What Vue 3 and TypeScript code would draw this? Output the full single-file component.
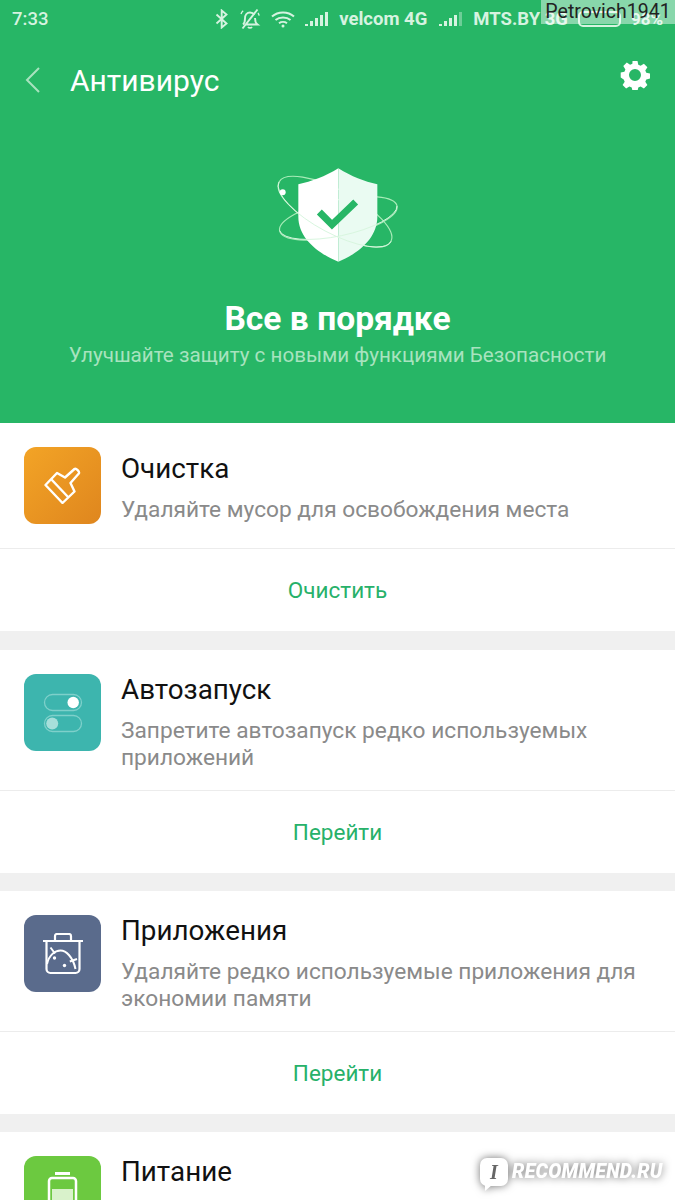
<script setup lang="ts">
interface Card { title: string; desc: string[]; action: string; icon: string }
const cards: Card[] = [
  { title: 'Очистка', desc: ['Удаляйте мусор для освобождения места'], action: 'Очистить', icon: 'brush' },
  { title: 'Автозапуск', desc: ['Запретите автозапуск редко используемых', 'приложений'], action: 'Перейти', icon: 'toggle' },
  { title: 'Приложения', desc: ['Удаляйте редко используемые приложения для', 'экономии памяти'], action: 'Перейти', icon: 'apps' },
]
</script>

<template>
  <div class="page">
    <header class="hero">
      <div class="status">
        <span class="time">7:33</span>
        <div class="status-right">
          <svg class="st-icon" width="14" height="20" viewBox="0 0 14 20" fill="none" stroke="#d6f3e0" stroke-width="1.900"><path d="M1.500 5.500l10 9-4.800 4V1.500l4.800 4-10 9"/></svg>
          <svg class="st-icon" width="22" height="22" viewBox="0 0 22 22" fill="none" stroke="#d6f3e0" stroke-width="1.900"><path d="M4 16.500c1.800-1.500 2-3.500 2-6C6 7 8 4.500 11 4.500c2 0 3.500 1 4.500 2.500M16 10c0 3 .5 5 2.500 6.500H7M9 19c1 1.200 3 1.200 4 0M3.500 20.500L18.500 1.500"/><path d="M2 6c.5-1.500 1.200-2.500 2.200-3.300M19 5c.6.800 1 1.700 1.200 2.700" stroke-width="1.300"/></svg>
          <svg class="st-icon" width="24" height="18" viewBox="0 0 24 18" fill="none" stroke="#d6f3e0" stroke-width="2"><path d="M1 6.500c6-5.500 16-5.500 22 0M4.500 10c4-3.500 11-3.500 15 0M8 13.200c2.200-1.600 5.800-1.600 8 0"/><circle cx="12" cy="16" r="1.500" fill="#d6f3e0" stroke="none"/></svg>
          <svg class="st-icon" width="24" height="16" viewBox="0 0 24 16" fill="#d6f3e0"><rect x="0" y="13" width="3" height="2"/><rect x="5" y="10" width="3" height="5"/><rect x="10" y="7" width="3" height="8"/><rect x="15" y="4" width="3" height="11"/><rect x="20" y="1" width="3" height="14"/></svg>
          <span class="carrier">velcom 4G</span>
          <svg class="st-icon" width="24" height="16" viewBox="0 0 24 16" fill="#d6f3e0"><rect x="0" y="13" width="3" height="2"/><rect x="5" y="10" width="3" height="5"/><rect x="10" y="7" width="3" height="8"/><rect x="15" y="4" width="3" height="11"/><rect x="20" y="1" width="3" height="14" opacity=".4"/></svg>
          <span class="carrier mts">MTS.BY 3G</span>
          <span class="battery"></span>
          <span class="carrier pct">98%</span>
        </div>
      </div>

      <div class="toolbar">
        <svg class="back" width="18" height="28" viewBox="0 0 18 28" fill="none" stroke="#a8e3bf" stroke-width="2"><path d="M15 2L3 14l12 12"/></svg>
        <span class="screen-title">Антивирус</span>
        <svg class="gear" width="30" height="30" viewBox="0 0 30 30">
          <path fill="#fff" fill-rule="evenodd" d="M12.500 1h5l.8 3.800 2.300 1 3.300-2.100 3.500 3.500-2.100 3.300 1 2.300 3.700.8v5l-3.700.8-1 2.300 2.100 3.300-3.500 3.500-3.300-2.100-2.300 1-.8 3.700h-5l-.8-3.700-2.300-1-3.300 2.100-3.500-3.500 2.100-3.300-1-2.300L.7 17.500v-5l3.700-.8 1-2.300-2.100-3.300 3.500-3.500 3.300 2.100 2.300-1zM15 9a6 6 0 1 0 0 12 6 6 0 0 0 0-12z"/>
        </svg>
      </div>

      <svg class="shield" width="160" height="125" viewBox="0 0 480 375" fill="none">
        <ellipse cx="225" cy="185" rx="190" ry="65" transform="rotate(28 225 185)" stroke="#a8ecb8" stroke-width="3.500"/>
        <ellipse cx="235" cy="205" rx="180" ry="55" transform="rotate(-12 235 205)" stroke="#a8ecb8" stroke-width="3.500"/>
        <path d="M235 55C195 80 155 94 115 103V200C115 265 175 310 235 335z" fill="#fff"/>
        <path d="M235 55C275 80 312 94 352 103V200C352 265 295 310 235 335z" fill="#eafbf2"/>
        <path d="M57 96A190 65 28 0 0 393 274" stroke="#d8f6df" stroke-width="3"/>
        <path d="M59 242A180 55 -12 0 0 411 168" stroke="#d8f6df" stroke-width="3"/>
        <circle cx="68" cy="127" r="9" fill="#fff"/>
        <path d="M178 186l38 38 71-68" stroke="#27b666" stroke-width="21"/>
      </svg>

      <h1 class="hero-title">Все в порядке</h1>
      <p class="hero-sub">Улучшайте защиту с новыми функциями Безопасности</p>
    </header>

    <section v-for="c in cards" :key="c.title" class="card">
      <div class="card-body">
        <div class="icon" :class="c.icon">
          <svg v-if="c.icon === 'brush'" width="37" height="37" viewBox="-.5 -.5 37 37" fill="none" stroke="#fff" stroke-width="2.400" stroke-linejoin="round">
            <path d="M1 17.500L12.500 5.500l8 4.500L30 1.500c1.500-1.200 5.500 2.800 4.300 4.500L26 15.500l4 8.500L18 35.500z"/>
            <path d="M6.500 11.500L24 30"/>
          </svg>
          <svg v-else-if="c.icon === 'toggle'" width="40" height="42" viewBox="0 0 40 42" fill="none">
            <rect x="1.500" y="2.500" width="37" height="16" rx="8" stroke="#7ed0ca" stroke-width="1.300"/>
            <circle cx="30.200" cy="10.500" r="5.700" fill="#fff"/>
            <rect x="1.500" y="23.500" width="37" height="16" rx="8" stroke="#7ed0ca" stroke-width="1.300"/>
            <circle cx="9.200" cy="31.500" r="6" fill="#a6dfda"/>
          </svg>
          <svg v-else width="42" height="42" viewBox="0 0 42 42" fill="none" stroke="#fff" stroke-width="2.200" stroke-linejoin="round">
            <path d="M1 8h40M13 8V3a2 2 0 0 1 2-2h12a2 2 0 0 1 2 2v5"/>
            <path d="M4.500 8v28a4 4 0 0 0 4 4h25a4 4 0 0 0 4-4V8"/>
            <path d="M5 31C7 22 13 17.500 18.500 17.500C24 17.500 31 24 33.500 36" stroke-width="2"/>
            <path d="M8.500 14.500l4.500 6M27.800 28.500l7.200-2.500" stroke-width="2"/>
            <circle cx="12.500" cy="25" r="1.700" fill="#fff" stroke="none"/>
            <circle cx="22.500" cy="32.500" r="1.700" fill="#fff" stroke="none"/>
          </svg>
        </div>
        <div class="text">
          <h2>{{ c.title }}</h2>
          <p v-for="l in c.desc" :key="l">{{ l }}</p>
        </div>
      </div>
      <div class="action">{{ c.action }}</div>
    </section>

    <section class="card last">
      <div class="card-body">
        <div class="icon power">
          <svg width="31" height="45" viewBox="0 0 31 45" fill="none" stroke="#fff" stroke-width="2.500">
            <path d="M8 1.500h15" stroke-width="3"/>
            <rect x="2" y="6" width="27" height="37" rx="3"/>
            <rect x="5" y="17" width="21" height="24" fill="#d9f2cb" stroke="none"/>
          </svg>
        </div>
        <div class="text"><h2>Питание</h2></div>
      </div>
    </section>

    <div class="wm">Petrovich1941</div>
    <div class="rec">
      <span class="rec-badge">I</span>
      <span class="rec-text">RECOMMEND.RU</span>
    </div>
  </div>
</template>

<style>
html, body { margin: 0; padding: 0; background: #f2f2f2; }
</style>

<style scoped>
.page {
  position: relative;
  width: 675px;
  height: 1200px;
  overflow: hidden;
  background: #f0f0f0;
  font-family: Roboto, "Noto Sans", sans-serif;
}
.hero {
  height: 423px;
  background: #27b666;
  display: flex;
  flex-direction: column;
  align-items: center;
  box-sizing: border-box;
}
.status {
  align-self: stretch;
  height: 38px;
  padding: 0 12px;
  display: flex;
  align-items: center;
  justify-content: space-between;
  color: #d6f3e0;
  font-size: 18.500px;
  font-weight: 500;
}
.status-right { display: flex; align-items: center; }
.st-icon { margin-right: 10px; }
.carrier { font-size: 18.500px; font-weight: 700; margin-right: 12px; white-space: nowrap; }
.carrier.mts { margin-right: 10px; }
.carrier.pct { font-size: 17px; margin-right: 0; }
.battery {
  width: 39px;
  height: 12px;
  border: 2px solid #d6f3e0;
  border-radius: 5px;
  margin-right: 10px;
}
.toolbar {
  align-self: stretch;
  height: 60px;
  padding: 24px 24px 0;
  box-sizing: border-box;
  display: flex;
  align-items: center;
}
.back { flex: none; }
.screen-title {
  margin-left: 28px;
  font-size: 30px;
  color: #fff;
  flex: 1;
}
.gear { flex: none; margin-right: 1px; margin-top: -10px; }
.shield { margin-top: 52px; margin-left: 5px; flex: none; }
.hero-title {
  margin: 24px 0 0;
  font-size: 33.600px;
  line-height: 40px;
  font-weight: 700;
  color: #fff;
}
.hero-sub {
  margin: 3px 0 0;
  font-size: 20.650px;
  line-height: 26px;
  color: #a8e3bf;
}
.card {
  background: #fff;
  margin-bottom: 18px;
}
.hero + .card { margin-bottom: 19px; }
.card-body {
  padding: 0 24px;
  display: flex;
  align-items: center;
  gap: 20px;
  border-bottom: 1px solid #ececec;
}
.icon {
  flex: none;
  align-self: flex-start;
  margin: 24px 0;
  width: 77px;
  height: 77px;
  border-radius: 12px;
  display: flex;
  align-items: center;
  justify-content: center;
}
.brush { background: linear-gradient(135deg, #f3a426, #df861e); }
.toggle { background: #3db5ae; }
.apps { background: #5a6b8c; }
.power { background: #6cc940; }
.text { min-width: 0; padding: 19.500px 0; }
.text h2 {
  margin: 0 0 7px;
  font-size: 27.800px;
  line-height: 40px;
  font-weight: 400;
  color: #111;
}
.text p {
  margin: 0;
  font-size: 22.700px;
  line-height: 27px;
  color: #8a8a8a;
  white-space: nowrap;
}
.action {
  height: 82px;
  display: flex;
  align-items: center;
  justify-content: center;
  font-size: 22.500px;
  color: #27b16a;
}
.last .card-body { border-bottom: 0; }
.last .text { align-self: flex-start; }
.wm {
  position: absolute;
  top: 0;
  right: 0;
  width: 134px;
  height: 24px;
  background: rgba(255, 255, 255, 0.45);
  color: #222;
  font-size: 19.500px;
  line-height: 24px;
  text-align: center;
  white-space: nowrap;
}
.rec {
  position: absolute;
  left: 480px;
  top: 1157px;
  display: flex;
  align-items: center;
  gap: 4px;
  filter: drop-shadow(0 0 4px rgba(0, 0, 0, 0.55));
}
.rec-badge {
  position: relative;
  width: 28px;
  height: 28px;
  border-radius: 7px;
  background: #fff;
  color: #666;
  font: italic 700 20px/28px "Liberation Serif", serif;
  text-align: center;
}
.rec-badge::after {
  content: "";
  position: absolute;
  left: 5px;
  bottom: -5px;
  border-left: 7px solid #fff;
  border-bottom: 6px solid transparent;
}
.rec-text {
  color: #fff;
  font: italic 900 19.500px/30px Roboto, sans-serif;
  letter-spacing: 0.300px;
}
</style>
